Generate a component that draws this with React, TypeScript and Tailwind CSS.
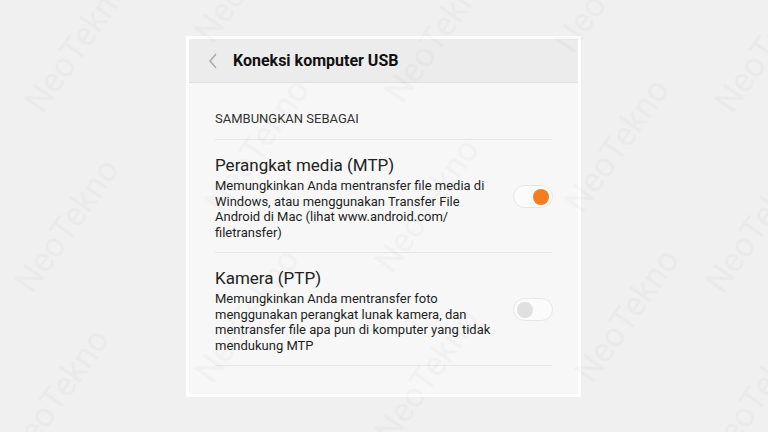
const marks = [
  { x: 0, y: 20 }, { x: -10, y: 200 }, { x: -20, y: 370 },
  { x: 170, y: -50 }, { x: 180, y: 120 }, { x: 170, y: 290 },
  { x: 360, y: 10 }, { x: 350, y: 180 }, { x: 350, y: 350 },
  { x: 530, y: -40 }, { x: 540, y: 120 }, { x: 550, y: 290 },
  { x: 690, y: 20 }, { x: 680, y: 200 }, { x: 680, y: 370 },
]

const modes = [
  {
    title: 'Perangkat media (MTP)',
    lines: ['Memungkinkan Anda mentransfer file media di', 'Windows, atau menggunakan Transfer File', 'Android di Mac (lihat www.android.com/', 'filetransfer)'],
    on: true,
  },
  {
    title: 'Kamera (PTP)',
    lines: ['Memungkinkan Anda mentransfer foto', 'menggunakan perangkat lunak kamera, dan', 'mentransfer file apa pun di komputer yang tidak', 'mendukung MTP'],
    on: false,
  },
]

function Toggle({ on }: { on: boolean }) {
  return (
    <div className="w-[40px] h-[23px] rounded-full border border-[#e6e6e6] bg-[#fbfbfb] flex items-center px-[3px]">
      {on ? (
        <div className="ml-auto w-[16px] h-[16px] rounded-full bg-[#f57c1f]" />
      ) : (
        <div className="w-[16px] h-[16px] rounded-full bg-[#e0e0e0]" />
      )}
    </div>
  )
}

export default function App() {
  return (
    <div className="relative w-[768px] h-[432px] overflow-hidden bg-[#f0f0f0] pt-[36px] pl-[186px]" style={{ fontFamily: 'Roboto, "Noto Sans", sans-serif' }}>
      <div className="w-[395px] h-[361px] bg-white p-[3px]">
        <div className="h-full bg-[#f7f7f7] flex flex-col">
          <div className="h-[44px] bg-[#ececec] border-b border-[#dedede] flex items-center pl-[19px]">
            <svg width="10" height="16" viewBox="0 0 10 16" className="mr-[15px]">
              <path d="M8 1 L2 8 L8 15" fill="none" stroke="#a8a8a8" strokeWidth="1.4" />
            </svg>
            <span className="text-[16px] font-bold text-[#111]">Koneksi komputer USB</span>
          </div>
          <div className="px-[26px]">
            <div className="h-[57px] border-b border-[#e6e6e6] flex items-end pb-[11px] text-[13px] text-[#333]">SAMBUNGKAN SEBAGAI</div>
            {modes.map((m, i) => (
              <div key={i} className="h-[113px] border-b border-[#e6e6e6] flex items-center">
                <div className="flex-1">
                  <div className="text-[17px] leading-[22px] text-[#222] mb-[2px] mt-[2px]">{m.title}</div>
                  {m.lines.map((l, j) => (
                    <div key={j} className="text-[13px] leading-[15.5px] text-[#1e1e1e]">{l}</div>
                  ))}
                </div>
                <div className="self-start mt-[45px] -mr-[1px]">
                  <Toggle on={m.on} />
                </div>
              </div>
            ))}
          </div>
        </div>
      </div>
      <div className="absolute inset-0 pointer-events-none">
        {marks.map((p, i) => (
          <div
            key={i}
            className="absolute text-[34px] text-[#000] opacity-[0.02] -rotate-[55deg] whitespace-nowrap"
            style={{ left: p.x, top: p.y }}
          >
            NeoTekno
          </div>
        ))}
      </div>
    </div>
  )
}
